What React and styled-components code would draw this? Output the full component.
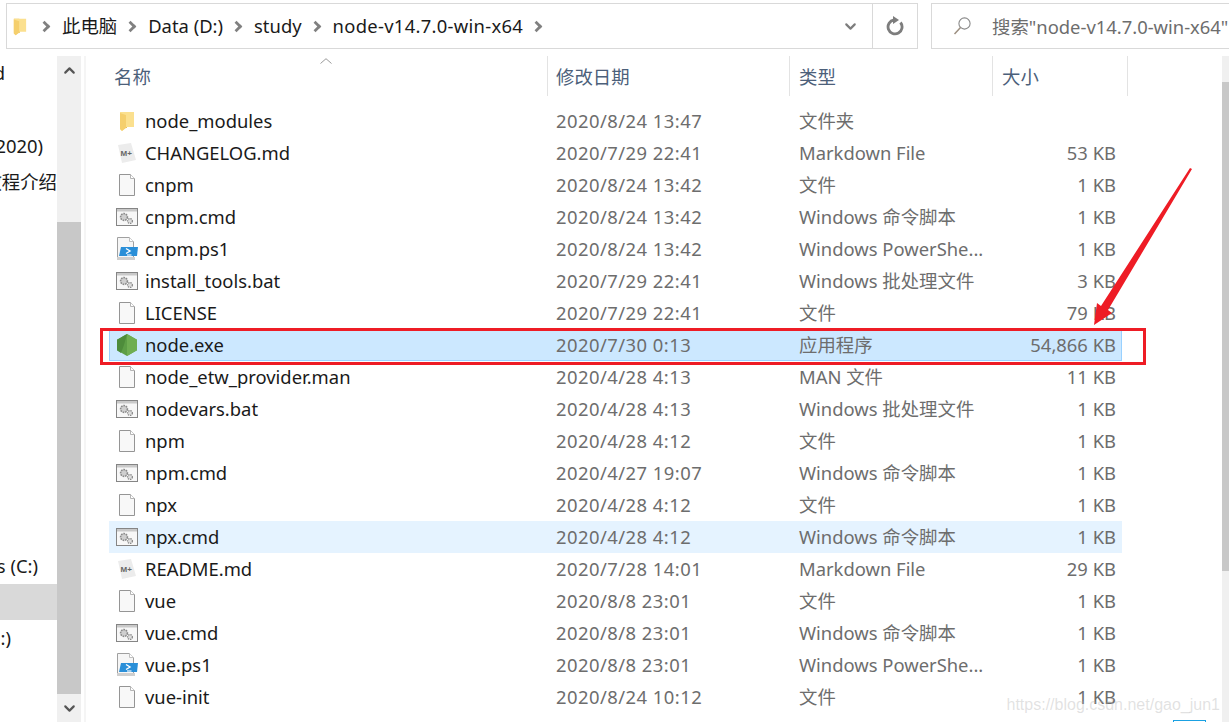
import React from 'react';
import styled, { createGlobalStyle } from 'styled-components';
import { ChevronDown, ChevronUp } from 'lucide-react';

const files = [
  ['folder', 'node_modules', '2020/8/24 13:47', '文件夹', ''],
  ['md', 'CHANGELOG.md', '2020/7/29 22:41', 'Markdown File', '53 KB'],
  ['file', 'cnpm', '2020/8/24 13:42', '文件', '1 KB'],
  ['cmd', 'cnpm.cmd', '2020/8/24 13:42', 'Windows 命令脚本', '1 KB'],
  ['ps', 'cnpm.ps1', '2020/8/24 13:42', 'Windows PowerShe...', '1 KB'],
  ['cmd', 'install_tools.bat', '2020/7/29 22:41', 'Windows 批处理文件', '3 KB'],
  ['file', 'LICENSE', '2020/7/29 22:41', '文件', '79 KB'],
  ['node', 'node.exe', '2020/7/30 0:13', '应用程序', '54,866 KB', 'selected'],
  ['file', 'node_etw_provider.man', '2020/4/28 4:13', 'MAN 文件', '11 KB'],
  ['cmd', 'nodevars.bat', '2020/4/28 4:13', 'Windows 批处理文件', '1 KB'],
  ['file', 'npm', '2020/4/28 4:12', '文件', '1 KB'],
  ['cmd', 'npm.cmd', '2020/4/27 19:07', 'Windows 命令脚本', '1 KB'],
  ['file', 'npx', '2020/4/28 4:12', '文件', '1 KB'],
  ['cmd', 'npx.cmd', '2020/4/28 4:12', 'Windows 命令脚本', '1 KB', 'hover'],
  ['md', 'README.md', '2020/7/28 14:01', 'Markdown File', '29 KB'],
  ['file', 'vue', '2020/8/8 23:01', '文件', '1 KB'],
  ['cmd', 'vue.cmd', '2020/8/8 23:01', 'Windows 命令脚本', '1 KB'],
  ['ps', 'vue.ps1', '2020/8/8 23:01', 'Windows PowerShe...', '1 KB'],
  ['file', 'vue-init', '2020/8/24 10:12', '文件', '1 KB'],
];

const FolderIcon = () => (
  <svg width="16" height="21" viewBox="0 0 16 21">
    <path d="M1 1h6l1 1v15H1z" fill="#e9c25c" />
    <path d="M1 1h14v15H7l-4 4-2-2z" fill="#fbe08f" />
    <path d="M1 2l6 2v13l-4 3-2-2z" fill="#f5cf6d" />
  </svg>
);

const DocIcon = () => (
  <svg width="18" height="22" viewBox="0 0 18 22">
    <path d="M1.5.5h11l4 4v17h-15z" fill="#f8f8f8" stroke="#959595" />
    <path d="M12.5.5v4h4" fill="#fff" stroke="#b5b5b5" />
  </svg>
);

const MdIcon = () => (
  <svg width="20" height="22" viewBox="0 0 20 22">
    <path d="M1 3l13-2 5 17-14 3z" fill="#ececec" />
    <text x="3.5" y="14" fontFamily="Liberation Sans, sans-serif" fontWeight="700" fontSize="8" fill="#666">M+</text>
  </svg>
);

const CmdIcon = () => (
  <svg width="22" height="18" viewBox="0 0 22 18">
    <rect x=".5" y=".5" width="21" height="17" fill="#f7f7f7" stroke="#858585" />
    <rect x="1" y="1" width="20" height="2.5" fill="#c9c9c9" />
    <circle cx="8" cy="9" r="3.4" fill="#cfcfcf" stroke="#8a8a8a" strokeWidth="1.6" strokeDasharray="1.6 .9" />
    <circle cx="14" cy="13" r="2.4" fill="#dcdcdc" stroke="#8a8a8a" strokeWidth="1.3" strokeDasharray="1.3 .8" />
  </svg>
);

const PsIcon = () => (
  <svg width="22" height="24" viewBox="0 0 22 24">
    <path d="M1.5.5h12l4 4v18h-16z" fill="#f6f6f6" stroke="#a0a0a0" />
    <path d="M13.5.5v4h4" fill="#fff" stroke="#c0c0c0" />
    <path d="M5 10h17l-1 9H3z" fill="#2a8fd8" />
    <path d="M1 20h18v3H1z" fill="#cfcfcf" />
    <path d="M10 11.5l4 2.5-4 2.5" fill="none" stroke="#fff" strokeWidth="1.4" />
    <path d="M11 18h4.5" stroke="#fff" strokeWidth="1.1" />
  </svg>
);

const NodeIcon = () => (
  <svg width="22" height="24" viewBox="0 0 22 24">
    <path d="M11 1l10 5.7v10.6L11 23 1 17.3V6.7z" fill="#5d9e46" />
    <path d="M11 1l10 5.7v10.6L11 23z" fill="#6fae52" />
    <path d="M1 6.7L11 1l-3 11-3 8-4-2.7z" fill="#4e8c3b" />
  </svg>
);

const icons = {
  folder: FolderIcon,
  md: MdIcon,
  file: DocIcon,
  cmd: CmdIcon,
  ps: PsIcon,
  node: NodeIcon,
};

const App = () => {
  return (
    <Page>
      <GlobalStyle />
      <TopBar>
        <Breadcrumb>
          <CrumbFolder>
            <FolderIcon />
          </CrumbFolder>
          <Crumb>此电脑</Crumb>
          <Crumb>Data (D:)</Crumb>
          <Crumb>study</Crumb>
          <Crumb $spacing={0.3}>node-v14.7.0-win-x64</Crumb>
          <Crumb />
          <Spacer />
          <DropButton>
            <ChevronDown size={17} strokeWidth={3} />
          </DropButton>
          <RefreshButton>
            <svg width="20" height="20" viewBox="0 0 20 20" fill="none">
              <path d="M15.5 6.5A7 7 0 1 1 9 4" stroke="#7d7d7d" strokeWidth="2.8" />
              <path d="M8 0l6 4-6 4z" fill="#7d7d7d" />
            </svg>
          </RefreshButton>
        </Breadcrumb>
        <SearchBox>
          <svg width="20" height="20" viewBox="0 0 20 20" fill="none">
            <circle cx="11.5" cy="7.5" r="5.6" stroke="#8a8a8a" strokeWidth="1.1" />
            <path d="M7.5 11.5L1.5 18" stroke="#9c8f80" strokeWidth="1.5" />
          </svg>
          <SearchText>搜索"node-v14.7.0-win-x64"</SearchText>
        </SearchBox>
      </TopBar>

      <Body>
        <Sidebar>
          <SideList>
            <SideItem $top={0} $end={4}>Download</SideItem>
            <SideItem $top={37} $end={42}>(2020)</SideItem>
            <SideItem $top={0} $end={56}>教程介绍</SideItem>
            <SideItem $top={348} $end={37}>Windows (C:)</SideItem>
            <SideItem $top={0} $active $end={0} />
            <SideItem $top={0} $end={10}>Data (D:)</SideItem>
          </SideList>
          <ScrollBar>
            <ScrollArrow>
              <ChevronUp size={17} strokeWidth={3} />
            </ScrollArrow>
            <ScrollTrack>
              <ScrollThumb />
            </ScrollTrack>
            <ScrollArrow>
              <ChevronDown size={17} strokeWidth={3} />
            </ScrollArrow>
          </ScrollBar>
        </Sidebar>

        <Main>
          <HeaderRow>
            <SortCaret>
              <svg width="12" height="6" viewBox="0 0 12 6" fill="none">
                <path d="M.5 5.5L6 .7l5.5 4.8" stroke="#9a9a9a" />
              </svg>
            </SortCaret>
            <HeaderCell $w={439} $pad={5}>名称</HeaderCell>
            <HeaderCell $w={242} $pad={8}>修改日期</HeaderCell>
            <HeaderCell $w={203} $pad={9}>类型</HeaderCell>
            <HeaderCell $w={135} $pad={9}>大小</HeaderCell>
          </HeaderRow>
          <Rows>
            {files.map(([icon, name, date, type, size, state]) => {
              const Icon = icons[icon];
              return (
                <Row key={name} $state={state}>
                  <IconSlot>
                    <Icon />
                  </IconSlot>
                  <NameCell>{name}</NameCell>
                  <DateCell>{date}</DateCell>
                  <TypeCell>{type}</TypeCell>
                  <SizeCell>{size}</SizeCell>
                </Row>
              );
            })}
          </Rows>
        </Main>

        <MainScroll>
          <MainThumb />
        </MainScroll>
      </Body>

      <RedBox />
      <Arrow width="104" height="160" viewBox="0 0 104 160">
        <path d="M99 0L101 1 17 142 21 145 3 157 6 135 10 138z" fill="#ee1c25" />
      </Arrow>
      <Watermark>https://blog.csdn.net/gao_jun1</Watermark>
      <CornerTab />
    </Page>
  );
};

const GlobalStyle = createGlobalStyle`
  html, body {
    margin: 0;
    padding: 0;
    background: #fff;
  }
`;

const Page = styled.div`
  position: relative;
  width: 1229px;
  height: 722px;
  overflow: hidden;
  background: #fff;
  font-family: 'Noto Sans', 'Noto Sans CJK SC', sans-serif;
  font-size: 18.4px;
  color: #1a1a1a;
`;

const TopBar = styled.div`
  display: flex;
  height: 56px;
  padding: 3px 0 0 6px;
  box-sizing: border-box;
  gap: 13px;
`;

const Breadcrumb = styled.div`
  display: flex;
  align-items: center;
  width: 912px;
  height: 46px;
  box-sizing: border-box;
  border: 1px solid #d9d9d9;
  padding-left: 6px;
`;

const CrumbFolder = styled.span`
  display: flex;
  width: 27px;
  margin-top: 2px;

  svg {
    width: 14px;
    height: 20px;
  }
`;

const Crumb = styled.span`
  display: flex;
  align-items: center;
  white-space: nowrap;
  margin-right: 9px;
  padding-bottom: 2px;
  letter-spacing: ${(p) => p.$spacing || 0}px;

  &::before {
    content: '';
    width: 9px;
    height: 9px;
    margin-right: 13px;
    margin-top: 2px;
    border-top: 3px solid #808080;
    border-right: 3px solid #808080;
    transform: rotate(45deg) scale(0.9);
    box-sizing: border-box;
    flex: none;
  }
`;

const Spacer = styled.span`
  flex: 1;
`;

const DropButton = styled.span`
  display: flex;
  align-items: center;
  justify-content: center;
  width: 44px;
  height: 100%;
  color: #7d7d7d;
`;

const RefreshButton = styled.span`
  display: flex;
  align-items: center;
  justify-content: center;
  width: 45px;
  height: 100%;
  border-left: 1px solid #d9d9d9;
  box-sizing: border-box;
`;

const SearchBox = styled.div`
  display: flex;
  align-items: center;
  flex: 1;
  height: 46px;
  min-width: 0;
  box-sizing: border-box;
  border: 1px solid #d9d9d9;
  border-right: 0;
  padding-left: 21px;
  gap: 19px;
  overflow: hidden;
`;

const SearchText = styled.span`
  white-space: nowrap;
  color: #6d6d6d;
  padding-bottom: 1px;
`;

const Body = styled.div`
  display: flex;
  height: 666px;
`;

const Sidebar = styled.div`
  display: flex;
  width: 84px;
  flex: none;
  border-right: 2px solid #f5f5f5;
`;

const SideList = styled.div`
  display: flex;
  flex-direction: column;
  width: 57px;
  flex: none;
  margin-top: -1px;
`;

const SideItem = styled.div`
  display: flex;
  align-items: center;
  justify-content: flex-end;
  flex: none;
  height: 36px;
  box-sizing: border-box;
  margin-top: ${(p) => p.$top}px;
  padding-right: ${(p) => 56 - p.$end}px;
  padding-bottom: 2px;
  overflow: hidden;
  white-space: nowrap;
  background: ${(p) => (p.$active ? '#d9d9d9' : 'transparent')};
`;

const ScrollBar = styled.div`
  display: flex;
  flex-direction: column;
  width: 24px;
  flex: none;
  background: #f0f0f0;
`;

const ScrollArrow = styled.div`
  display: flex;
  align-items: center;
  justify-content: center;
  height: 28px;
  flex: none;
  color: #555;
`;

const ScrollTrack = styled.div`
  flex: 1;
  padding-top: 138px;
  display: flex;
`;

const ScrollThumb = styled.div`
  flex: 1;
  background: #c8c8c8;
`;

const Main = styled.div`
  width: 1036px;
  flex: none;
  padding-left: 23px;
  box-sizing: border-box;
`;

const HeaderRow = styled.div`
  position: relative;
  display: flex;
  height: 40px;
`;

const SortCaret = styled.span`
  position: absolute;
  left: 211px;
  top: 1px;
  line-height: 0;
`;

const HeaderCell = styled.div`
  display: flex;
  align-items: center;
  flex: none;
  width: ${(p) => p.$w}px;
  padding-left: ${(p) => p.$pad}px;
  box-sizing: border-box;
  border-right: 1px solid #e3e3e3;
  color: #4c607a;
`;

const Rows = styled.div`
  margin-top: 9px;
  width: 1013px;
`;

const rowBackground = {
  selected: '#cce8ff',
  hover: '#e5f3ff',
};

const Row = styled.div`
  display: flex;
  align-items: center;
  height: 32px;
  box-sizing: border-box;
  background: ${(p) => rowBackground[p.$state] || 'transparent'};
  box-shadow: ${(p) => (p.$state === 'selected' ? 'inset 0 0 0 1px #99d1ff' : 'none')};
`;

const IconSlot = styled.span`
  display: flex;
  align-items: center;
  justify-content: center;
  flex: none;
  width: 36px;
`;

const NameCell = styled.span`
  flex: none;
  width: 411px;
  padding-bottom: 2px;
  white-space: nowrap;
`;

const DateCell = styled.span`
  flex: none;
  width: 243px;
  padding-bottom: 2px;
  white-space: nowrap;
  color: #6d6d6d;
  letter-spacing: 0.47px;
`;

const TypeCell = styled.span`
  flex: none;
  width: 197px;
  padding-bottom: 2px;
  white-space: nowrap;
  color: #6d6d6d;
`;

const SizeCell = styled.span`
  flex: none;
  width: 120px;
  padding-bottom: 2px;
  text-align: right;
  white-space: nowrap;
  color: #6d6d6d;
`;

const MainScroll = styled.div`
  flex: 1;
  margin-left: 100px;
  background: #f0f0f0;
`;

const MainThumb = styled.div`
  height: 489px;
  margin-top: 26px;
  background: #c8c8c8;
`;

const RedBox = styled.div`
  position: absolute;
  left: 100px;
  top: 328px;
  width: 1046px;
  height: 37px;
  box-sizing: border-box;
  border: 3px solid #ee1c25;
`;

const Arrow = styled.svg`
  position: absolute;
  left: 1091px;
  top: 168px;
`;

const Watermark = styled.div`
  position: absolute;
  right: 9px;
  top: 696px;
  font-family: 'Liberation Sans', sans-serif;
  font-size: 16px;
  color: rgba(170, 170, 170, 0.35);
`;

const CornerTab = styled.div`
  position: absolute;
  left: 1173px;
  top: 720px;
  width: 33px;
  height: 4px;
  box-sizing: border-box;
  border: 1px solid #1ba1e2;
`;

export default App;
